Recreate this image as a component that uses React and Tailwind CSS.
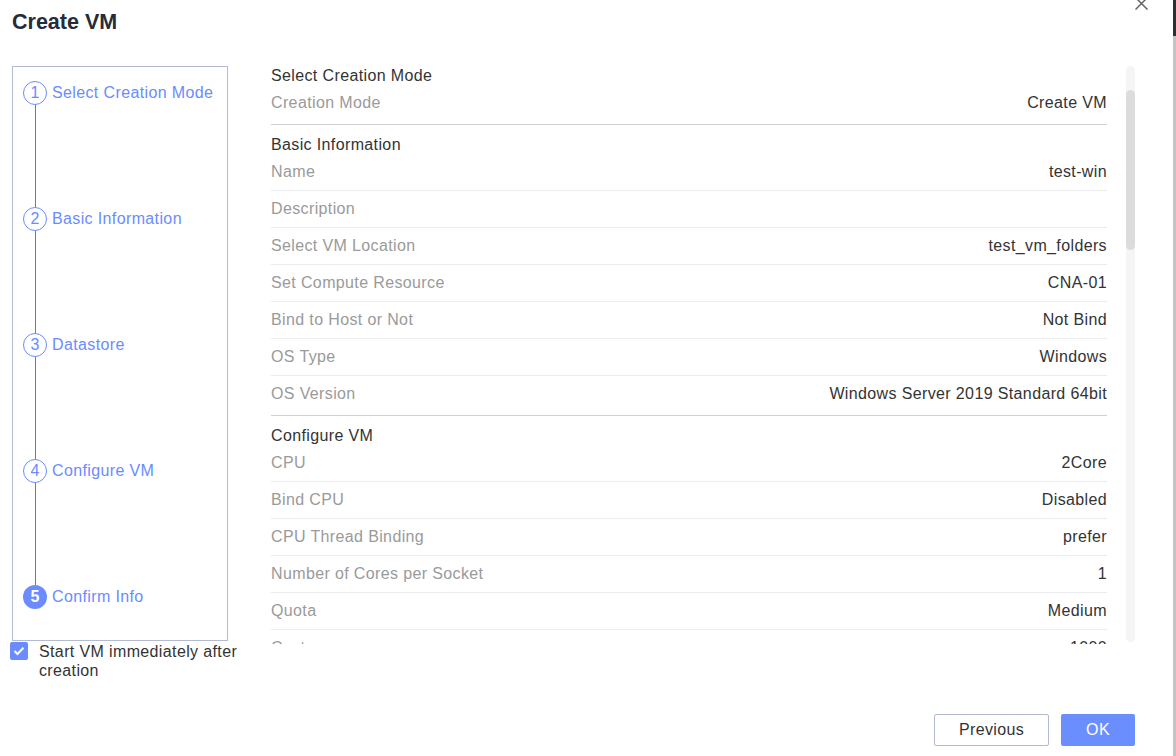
import React from "react";

const sections = [
  { title: "Select Creation Mode", rows: [["Creation Mode", "Create VM"]] },
  {
    title: "Basic Information",
    rows: [
      ["Name", "test-win"],
      ["Description", ""],
      ["Select VM Location", "test_vm_folders"],
      ["Set Compute Resource", "CNA-01"],
      ["Bind to Host or Not", "Not Bind"],
      ["OS Type", "Windows"],
      ["OS Version", "Windows Server 2019 Standard 64bit"],
    ],
  },
  {
    title: "Configure VM",
    rows: [
      ["CPU", "2Core"],
      ["Bind CPU", "Disabled"],
      ["CPU Thread Binding", "prefer"],
      ["Number of Cores per Socket", "1"],
      ["Quota", "Medium"],
      ["Cost", "1000"],
      ["Memory", "4GB"],
      ["Bind Memory", "Disabled"],
    ],
  },
];

const steps = [
  "Select Creation Mode",
  "Basic Information",
  "Datastore",
  "Configure VM",
  "Confirm Info",
];

function Section({ s, first }) {
  return (
    <div className={"border-b border-[#cfcfcf] pb-[3px] " + (first ? "" : "pt-[10px]")}>
      <div className="h-[19px] leading-[19px] text-[#333333]">{s.title}</div>
      {s.rows.map((r, i) => {
        const last = i === s.rows.length - 1;
        return (
          <div
            key={r[0]}
            className={
              "flex justify-between items-center leading-5 " +
              (last ? "h-[36px]" : "h-[37px] border-b border-[#ececec]")
            }
          >
            <span className="text-[#9a9a9a]">{r[0]}</span>
            <span className="text-[#333333]">{r[1]}</span>
          </div>
        );
      })}
    </div>
  );
}

export default function App() {
  return (
    <div
      className="w-[1176px] h-[756px] flex bg-white overflow-hidden text-[16px] tracking-[0.37px]"
      style={{ fontFamily: '"Liberation Sans", Arial, sans-serif' }}
    >
      <div className="w-[1173px] h-full relative flex flex-col">
        {/* close */}
        <svg
          className="absolute left-[1135px] top-[-3px]"
          width="13"
          height="13"
          viewBox="0 0 13 13"
        >
          <path d="M0.5 0.5 L12.5 12.5 M12.5 0.5 L0.5 12.5" stroke="#666" strokeWidth="1.5" fill="none" />
        </svg>

        <div className="pt-[9px] pl-3 h-[26px] box-content text-[21.5px] leading-[26px] font-bold tracking-normal text-[#252b3a]">
          Create VM
        </div>

        <div className="flex items-start pl-3 mt-[29px]">
          {/* left column */}
          <div className="w-[216px] shrink-0 mt-[2px]">
            <div className="h-[575px] border border-[#b3bad2] pt-[14px] pl-[10px]">
              {steps.map((label, i) => {
                const active = i === 4;
                return (
                  <div key={label}>
                    <div className="flex items-center h-[24px]">
                      <div
                        className={
                          "w-[24px] h-[24px] rounded-full flex items-center justify-center leading-none text-[16px] tracking-normal " +
                          (active
                            ? "bg-[#6a8cff] text-white font-bold"
                            : "border border-[#6a8cff] text-[#6a8cff]")
                        }
                      >
                        {i + 1}
                      </div>
                      <span className="ml-[5px] text-[#6a8cff] leading-5 whitespace-nowrap">{label}</span>
                    </div>
                    {i < steps.length - 1 && (
                      <div className="w-px h-[102px] bg-[#4f78ff] ml-[12px]" />
                    )}
                  </div>
                );
              })}
            </div>
            <div className="flex items-start w-[240px] -ml-[2px] mt-px">
              <div className="w-[18px] h-[18px] rounded-[2px] bg-[#6a8cff] flex items-center justify-center shrink-0">
                <svg width="12" height="10" viewBox="0 0 12 10">
                  <path d="M1.5 5 L4.5 8 L10.5 1.8" stroke="white" strokeWidth="2" fill="none" />
                </svg>
              </div>
              <div className="ml-[11px] w-[210px] leading-[19px] text-[#333333]">
                Start VM immediately after creation
              </div>
            </div>
          </div>

          {/* content */}
          <div className="ml-[43px] flex items-start mt-[2px]">
            <div className="w-[836px] h-[578px] overflow-hidden">
              {sections.map((s, i) => (
                <Section key={s.title} s={s} first={i === 0} />
              ))}
            </div>
            <div className="ml-[19px] w-[9px] h-[576px] bg-[#f5f5f5] rounded-full pt-[24px]">
              <div className="w-[9px] h-[160px] bg-[#dcdcdc] rounded-full" />
            </div>
          </div>
        </div>

        <div className="mt-auto flex justify-end gap-3 pr-[38px] pb-[10px]">
          <button className="w-[115px] h-[32px] border border-[#b3bad2] rounded-[2px] bg-white text-[#333333] text-[16px]">
            Previous
          </button>
          <button className="w-[74px] h-[32px] rounded-[2px] bg-[#6b8eff] text-white text-[16px]">
            OK
          </button>
        </div>
      </div>
      <div className="w-[3px] h-full flex flex-col">
        <div className="h-[36px] bg-[#2f2f2f]" />
        <div className="flex-1 bg-[#c4c4c4]" />
      </div>
    </div>
  );
}
